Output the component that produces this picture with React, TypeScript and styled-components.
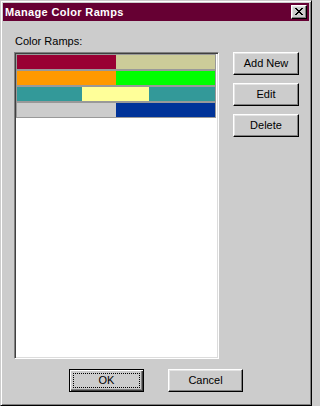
import { FC } from 'react';
import styled, { createGlobalStyle, css } from 'styled-components';

const face = '#cccccc';

const GlobalStyle = createGlobalStyle`
  html, body {
    margin: 0;
    padding: 0;
    background: ${face};
  }
  body {
    font-family: "Liberation Sans", Arial, sans-serif;
    font-size: 11px;
    color: #000;
  }
`;

const Window = styled.div`
  box-sizing: border-box;
  width: 312px;
  height: 406px;
  display: flex;
  flex-direction: column;
  padding: 2px;
  background: ${face};
  border: 1px solid;
  border-color: ${face} #000000 #000000 ${face};
  box-shadow: inset 1px 1px #ffffff, inset -1px -1px #808080;
`;

const TitleBar = styled.div`
  height: 18px;
  flex: none;
  display: flex;
  align-items: center;
  justify-content: space-between;
  padding: 0 2px 0 2px;
  background: #660033;
`;

const Title = styled.span`
  color: #ffffff;
  font-weight: bold;
  font-size: 11px;
  letter-spacing: 0.35px;
  line-height: 13px;
`;

const bevel = css`
  box-sizing: border-box;
  background: ${face};
  border: 1px solid;
  border-color: #ffffff #000000 #000000 #ffffff;
  box-shadow: inset -1px -1px #808080, inset 1px 1px #e4e4e4;
`;

const CloseButton = styled.div`
  ${bevel};
  width: 16px;
  height: 14px;
  display: flex;
  align-items: center;
  justify-content: center;
  padding-bottom: 1px;
`;

const Body = styled.div`
  flex: 1;
  display: flex;
  flex-direction: column;
  padding: 14px 0 10px 11px;
`;

const MainRow = styled.div`
  display: flex;
  align-items: flex-start;
  gap: 14px;
`;

const LeftColumn = styled.div`
  display: flex;
  flex-direction: column;
`;

const Label = styled.div`
  height: 13px;
  line-height: 13px;
  margin: 0 0 4px 1px;
`;

const RampList = styled.div`
  box-sizing: border-box;
  width: 205px;
  height: 307px;
  display: flex;
  flex-direction: column;
  background: #ffffff;
  border: 1px solid;
  border-color: #808080 #ffffff #ffffff #808080;
  box-shadow: inset 1px 1px #404040, inset -1px -1px #dcdcdc;
  padding: 1px;
`;

const RampItem = styled.div`
  width: 200px;
  height: 16px;
  box-sizing: border-box;
  display: flex;
  border: 1px solid #999999;
`;

const RampStop = styled.div<{ color: string; grow: number }>`
  flex: ${({ grow }) => grow} 0 0;
  background: ${({ color }) => color};
`;

const SideButtons = styled.div`
  display: flex;
  flex-direction: column;
  gap: 8px;
  margin-top: 17px;
`;

const Button = styled.div<{ $width: number; $default?: boolean }>`
  ${bevel};
  width: ${({ $width }) => $width}px;
  height: 23px;
  display: flex;
  align-items: center;
  justify-content: center;
  line-height: 13px;
  position: relative;
  ${({ $default }) =>
    $default &&
    css`
      border-color: #000000;
      box-shadow: inset 1px 1px #ffffff, inset -1px -1px #404040, inset -2px -2px #808080;
    `}
`;

const FocusRing = styled.span`
  position: absolute;
  inset: 3px;
  border: 1px dotted #000000;
`;

const Footer = styled.div`
  display: flex;
  justify-content: center;
  gap: 24px;
  margin-top: 10px;
  margin-left: -11px;
`;

type Stop = { color: string; grow: number };

const ramps: Stop[][] = [
  [
    { color: '#990033', grow: 99 },
    { color: '#cccc99', grow: 99 },
  ],
  [
    { color: '#ff9900', grow: 99 },
    { color: '#00ff00', grow: 99 },
  ],
  [
    { color: '#339999', grow: 65 },
    { color: '#ffff99', grow: 67 },
    { color: '#339999', grow: 66 },
  ],
  [
    { color: '#cccccc', grow: 99 },
    { color: '#003399', grow: 99 },
  ],
];

// pixel rows of the caption close glyph: [x, width]
const closeGlyph: [number, number][][] = [
  [[0, 2], [6, 2]],
  [[1, 2], [5, 2]],
  [[2, 4]],
  [[3, 2]],
  [[2, 4]],
  [[1, 2], [5, 2]],
  [[0, 2], [6, 2]],
];

const CloseIcon: FC = () => (
  <svg width="8" height="7" viewBox="0 0 8 7" shapeRendering="crispEdges">
    {closeGlyph.map((row, y) =>
      row.map(([x, w]) => <rect key={`${y}-${x}`} x={x} y={y} width={w} height={1} fill="#000" />),
    )}
  </svg>
);

const App: FC = () => (
  <>
    <GlobalStyle />
    <Window>
      <TitleBar>
        <Title>Manage Color Ramps</Title>
        <CloseButton>
          <CloseIcon />
        </CloseButton>
      </TitleBar>
      <Body>
        <MainRow>
          <LeftColumn>
            <Label>Color Ramps:</Label>
            <RampList>
              {ramps.map((ramp, i) => (
                <RampItem key={i}>
                  {ramp.map((stop, j) => (
                    <RampStop key={j} color={stop.color} grow={stop.grow} />
                  ))}
                </RampItem>
              ))}
            </RampList>
          </LeftColumn>
          <SideButtons>
            <Button $width={66}>Add New</Button>
            <Button $width={66}>Edit</Button>
            <Button $width={66}>Delete</Button>
          </SideButtons>
        </MainRow>
        <Footer>
          <Button $width={75} $default>
            OK
            <FocusRing />
          </Button>
          <Button $width={75}>Cancel</Button>
        </Footer>
      </Body>
    </Window>
  </>
);

export default App;
